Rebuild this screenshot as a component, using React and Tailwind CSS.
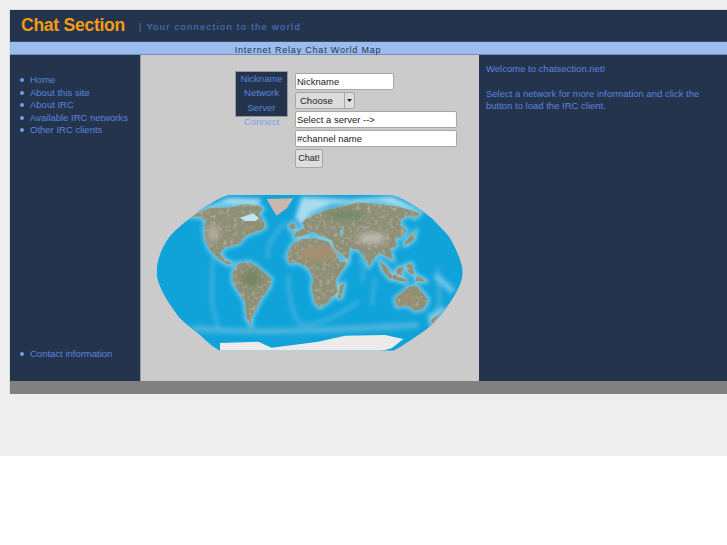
const sideLinks = ['Home', 'About this site', 'About IRC', 'Available IRC networks', 'Other IRC clients'];

// traced by eye from the reference, in 3x coordinates
const land = [
  'M140 95 L165 80 L200 68 L250 68 L300 58 L340 62 L355 72 L340 85 L350 100 L362 125 L350 135 L320 145 L298 155 L285 175 L270 180 L245 185 L232 195 L225 205 L240 225 L262 235 L250 240 L220 220 L195 195 L183 170 L178 135 L182 105 L165 95 Z',
  'M280 235 L315 232 L340 248 L380 282 L372 310 L345 345 L335 370 L320 395 L318 420 L305 400 L300 350 L265 295 L262 265 Z',
  'M425 215 L440 180 L470 162 L510 160 L550 170 L565 200 L585 230 L608 232 L585 265 L572 285 L578 320 L550 350 L525 368 L510 355 L500 310 L505 280 L490 250 L460 232 L435 235 Z',
  'M445 155 L455 138 L480 130 L470 115 L485 100 L520 85 L545 75 L600 62 L640 52 L700 58 L760 65 L825 85 L810 100 L795 90 L770 100 L765 120 L785 135 L770 155 L750 160 L755 185 L735 190 L745 225 L725 215 L705 205 L690 215 L672 245 L655 210 L640 195 L615 190 L610 225 L570 190 L560 165 L520 150 L505 140 L480 150 L465 155 Z',
  'M585 300 L598 296 L588 340 L578 338 Z',
  'M750 340 L775 322 L790 305 L815 303 L830 320 L850 345 L835 372 L810 378 L790 362 L755 365 Z',
  'M705 228 L725 245 L745 278 L735 282 L712 255 Z',
  'M745 268 L785 285 L780 292 L742 282 Z',
  'M755 250 L775 245 L770 270 L755 268 Z',
  'M785 240 L800 235 L808 270 L790 262 Z',
  'M815 272 L848 290 L812 288 Z',
  'M800 150 L812 140 L806 165 L780 182 L778 172 Z',
  'M858 405 L885 385 L860 420 Z',
  'M432 122 L445 112 L452 130 L436 135 Z',
];

function WorldMap() {
  return (
    <svg width="330" height="175" viewBox="0 0 990 525" className="block">
      <defs>
        <clipPath id="globe">
          <path d="M250 30 L740 30 C790 45 830 75 860 100 C890 130 905 145 915 160 C935 195 953 235 953 262 C953 300 920 350 880 400 C855 425 840 438 820 450 C790 470 770 485 745 497 L225 497 C200 485 185 468 165 450 C140 430 125 420 105 400 C70 355 35 300 35 262 C35 225 50 190 70 160 C90 135 110 120 135 100 C165 75 205 45 250 30 Z" />
        </clipPath>
        <filter id="soft"><feGaussianBlur stdDeviation="6" /></filter>
        <filter id="edge"><feGaussianBlur stdDeviation="2" /></filter>
        <filter id="patch"><feGaussianBlur stdDeviation="10" /></filter>
        <filter id="rough" x="0" y="0" width="100%" height="100%">
          <feTurbulence type="fractalNoise" baseFrequency="0.09" numOctaves="3" seed="4" />
          <feColorMatrix values="0 0 0 0 0.78  0 0 0 0 0.68  0 0 0 0 0.56  0 0 0 1 -0.5" />
          <feComposite in2="SourceAlpha" operator="in" />
          <feMerge><feMergeNode in="SourceGraphic" /><feMergeNode /></feMerge>
        </filter>
      </defs>
      <g clipPath="url(#globe)">
        <rect width="990" height="525" fill="#10a3da" />
        {/* ocean floor ridges and shelves */}
        <g filter="url(#soft)" fill="none" stroke="#4fb5de" strokeWidth="8">
          <path d="M420 110 C390 150 360 180 370 220 M430 270 C430 330 440 390 470 420 C520 420 570 400 640 350 M205 210 C200 300 190 380 230 440 M690 280 L680 360 M880 250 C870 290 900 340 870 390 M640 220 C660 240 660 260 650 290" />
          <path d="M140 430 C300 445 500 440 820 420" strokeWidth="18" />
          <path d="M870 270 L925 320 M850 400 L900 370" strokeWidth="18" stroke="#70c4e5" />
        </g>
        <g fill="none" stroke="#8fd4ec" strokeWidth="10" filter="url(#soft)">
          {land.map((d) => <path key={d} d={d} />)}
        </g>
        <g fill="#a9dcef" filter="url(#soft)">
          <path d="M470 36 L620 44 L740 34 L850 85 L700 50 L560 58 L500 85 L470 118 L450 100 Z" />
          <path d="M150 85 L250 38 L350 42 L340 60 L230 60 Z" />
        </g>
        {/* continents */}
        <g fill="#8d8f76" stroke="#b9a685" strokeWidth="1" filter="url(#rough)">
          {land.map((d) => <path key={d} d={d} />)}
        </g>
        <g filter="url(#patch)">
          <ellipse cx="680" cy="160" rx="42" ry="16" fill="#c2bbb4" />
          <ellipse cx="205" cy="145" rx="16" ry="28" fill="#b5aca0" />
          <ellipse cx="520" cy="205" rx="60" ry="22" fill="#a4906f" />
          <ellipse cx="600" cy="90" rx="60" ry="16" fill="#75896a" />
          <ellipse cx="320" cy="280" rx="30" ry="24" fill="#75845f" />
          <ellipse cx="790" cy="340" rx="26" ry="14" fill="#a38e6c" />
        </g>
        <path d="M285 98 L325 85 L342 100 L330 108 L300 108 Z" fill="#bfe5f3" filter="url(#edge)" />
        <path d="M585 135 L595 135 L592 155 L585 152 Z" fill="#6cc2e4" />
        <path d="M365 42 L445 40 L425 70 L395 92 L378 65 Z" fill="#c9b8ab" filter="url(#edge)" />
        <path d="M225 474 L340 470 L380 488 L520 470 L600 452 L720 450 L775 462 L740 490 L700 500 L225 500 Z" fill="#ecebea" filter="url(#edge)" />
      </g>
    </svg>
  );
}

export default function App() {
  return (
    <div className="h-[545px] overflow-hidden bg-white font-['Liberation_Sans',sans-serif] text-[9.5px] text-[#5a85de]">
      <div className="h-[456px] bg-[#eeeeee] pl-[9px] pt-[9px]">
        <div className="w-[800px] border-t border-l border-[#dddddd]">
          <div className="flex h-[32px] items-center bg-[#24344d] pl-[11px] border-b border-[#3a4d6e]">
            <span className="mr-[14px] text-[17.5px] font-bold tracking-[-0.25px] text-[#f59a13]">Chat Section</span>
            <span className="pt-[4px] tracking-[1.25px] text-[#4f79cf]">| Your connection to the world</span>
          </div>
          <div className="h-[13px] w-[727px] bg-[#9dbcee] border-b border-[#6f8dc0] pr-[131px] text-center text-[9px] leading-[16px] tracking-[0.8px] text-[#24344d]">
            Internet Relay Chat World Map
          </div>
          <div className="flex h-[326px]">
            <div className="flex w-[131px] flex-col justify-between border-r border-[#999999] bg-[#24344d] pb-[20px] pl-[10px] pt-[19px]">
              <ul className="flex flex-col">
                {sideLinks.map((link) => (
                  <li key={link} className="flex h-[12.5px] items-center whitespace-nowrap">
                    <span className="mr-[6px] size-[4px] rounded-full bg-[#6f9bf0]" />
                    {link}
                  </li>
                ))}
              </ul>
              <div className="flex items-center">
                <span className="mr-[6px] size-[4px] rounded-full bg-[#6f9bf0]" />
                Contact information
              </div>
            </div>
            <div className="w-[338px] bg-[#cbcbcb]">
              <div className="flex pl-[94px] pt-[16px]">
                <div className="w-[53px] text-center">
                  <div className="flex h-[46px] flex-col items-center border border-[#999999] bg-[#24344d] leading-[14.3px]">
                    <span>Nickname</span>
                    <span>Network</span>
                    <span>Server</span>
                  </div>
                  <div className="-mt-px text-[#7d9fea] leading-[12px]">Connect</div>
                </div>
                <div className="ml-[7px] flex flex-col items-start pt-[2px] text-[#222222]">
                  <input readOnly value="Nickname" className="h-[17px] w-[99px] rounded-[2px] border border-[#a6a6a6] bg-white pb-px pl-[1px] outline-none" />
                  <div className="mt-[2px] flex h-[17px] items-stretch rounded-[2px] border border-[#a6a6a6] bg-[#dcdcdc]">
                    <span className="w-[48px] pl-[4px] leading-[15px]">Choose</span>
                    <span className="flex w-[10px] items-center justify-center border-l border-[#a6a6a6]">
                      <svg width="5" height="3" viewBox="0 0 5 3"><path d="M0 0h5L2.5 3z" fill="#222222" /></svg>
                    </span>
                  </div>
                  <input readOnly value="Select a server -->" className="mt-[2px] h-[17px] w-[162px] rounded-[2px] border border-[#a6a6a6] bg-white pl-[1px] outline-none" />
                  <input readOnly value="#channel name" className="mt-[2px] h-[17px] w-[162px] rounded-[2px] border border-[#a6a6a6] bg-white pb-px pl-[1px] outline-none" />
                  <button className="mt-[2px] h-[19px] w-[28px] rounded-[2px] border border-[#a6a6a6] bg-[#dedede] text-[9px]">Chat!</button>
                </div>
              </div>
              <div className="ml-[4px] mt-[17px]">
                <WorldMap />
              </div>
            </div>
            <div className="flex-1 bg-[#24344d] pl-[7px] pt-[8px] leading-[12px]">
              <p>Welcome to chatsection.net!</p>
              <p className="mt-[12.5px]">Select a network for more information and click the<br />button to load the IRC client.</p>
            </div>
          </div>
          <div className="h-[13px] bg-[#808080]" />
        </div>
      </div>
    </div>
  );
}
